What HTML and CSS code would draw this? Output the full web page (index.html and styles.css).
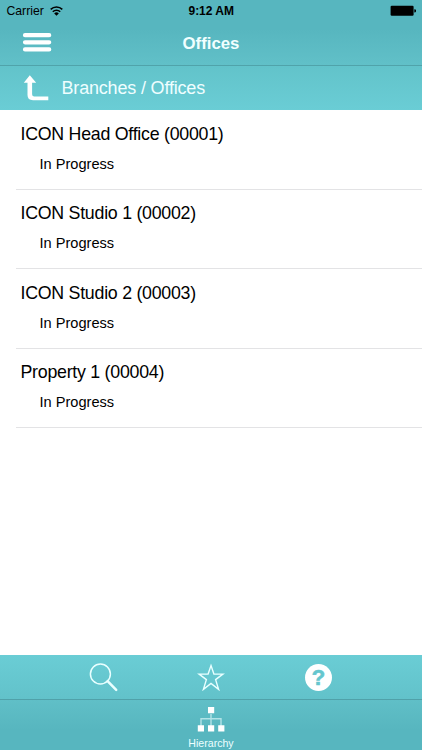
FILE: index.html
```html
<!DOCTYPE html>
<html lang="en">
<head>
  <meta charset="UTF-8" />
  <meta name="viewport" content="width=device-width, initial-scale=1.0" />
  <title>Offices</title>
  <link rel="stylesheet" href="styles.css">
</head>
<body>
  <header class="header">
    <div class="status">
      <div class="carrier">
        <span>Carrier</span>
        <svg width="13" height="11" viewBox="0 0 13 11" fill="none" stroke="#000" stroke-width="1.6">
          <path d="M.7 3.4a8.3 8.3 0 0 1 11.6 0M2.8 5.7a5.3 5.3 0 0 1 7.4 0" />
          <path d="M4.2 7.4a3.3 3.3 0 0 1 4.6 0L6.5 9.8z" fill="#000" stroke="none" />
        </svg>
      </div>
      <span class="time">9:12 AM</span>
      <svg class="battery" width="26" height="12" viewBox="0 0 26 12">
        <rect x=".6" y=".7" width="23" height="10" rx="1.2" />
        <path d="M24.3 4.2h.2a1.5 1.5 0 0 1 0 3.2h-.2z" />
      </svg>
    </div>
    <div class="navbar">
      <svg class="menu" width="30" height="20" viewBox="0 0 30 20" stroke="#fff" stroke-width="4.2" stroke-linecap="round">
        <path d="M3 2.2h24.2M3 9.3h24.2M3 16.4h24.2" />
      </svg>
      <h1>Offices</h1>
    </div>
  </header>

  <div class="breadcrumb">
    <svg width="26" height="26" viewBox="0 0 26 26">
      <path d="M6.8.3 13.2 7.8H9.1v11.4q0 2.2 2.2 2.2H25.3V25.2H10Q4.5 25.2 4.5 20V7.8H.8z" fill="#fff" />
    </svg>
    <span>Branches / Offices</span>
  </div>

  <ul class="list">
    <li><div class="name">ICON Head Office (00001)</div><div class="state">In Progress</div></li>
    <li><div class="name">ICON Studio 1 (00002)</div><div class="state">In Progress</div></li>
    <li><div class="name">ICON Studio 2 (00003)</div><div class="state">In Progress</div></li>
    <li><div class="name">Property 1 (00004)</div><div class="state">In Progress</div></li>
  </ul>

  <div class="toolbar">
    <svg width="30" height="30" viewBox="0 0 30 30" fill="none" stroke="#e9ffff">
      <circle cx="11.4" cy="12" r="10" stroke-width="1.5" />
      <path d="m18.6 19.2 8.6 8.6" stroke-width="2.5" stroke-linecap="round" />
    </svg>
    <svg width="28" height="28" viewBox="0 0 28 28" fill="none" stroke="#e9ffff" stroke-width="1.4">
      <path d="m14 2.6 2.9 8.5h9l-7.3 5.5 3 9.8-7.6-6-7.6 6 3-9.8L2.1 11.1h9z" />
    </svg>
    <div class="help">?</div>
  </div>

  <nav class="tabbar">
    <svg width="28" height="26" viewBox="0 0 28 26">
      <path d="M14 7v12M4 19v-7.2h20V19" fill="none" stroke="#b2e3e7" stroke-width="1.4" />
      <path d="M11 0h6.2v6.2H11zM.8 18.3H7v6.2H.8zM11 18.3h6.2v6.2H11zM21.2 18.3h6.2v6.2h-6.2z" fill="#fff" />
    </svg>
    <span>Hierarchy</span>
  </nav>
</body>
</html>
```

FILE: styles.css
```css
html, body {
  margin: 0;
  padding: 0;
  height: 100%;
}
body {
  display: flex;
  flex-direction: column;
  overflow: hidden;
  font-family: "Liberation Sans", Arial, sans-serif;
  color: #000;
  background: #fff;
}
svg { display: block; flex: none; }

/* top bars */
.header {
  height: 66px;
  box-sizing: border-box;
  border-bottom: 1px solid #50a3aa;
  background: linear-gradient(#57b6bf 0, #57b6bf 45%, #61c0c8 100%);
}
.status {
  display: grid;
  grid-template-columns: 1fr auto 1fr;
  align-items: center;
  height: 22px;
  padding: 0 6px 0 6.5px;
  font-size: 12.2px;
}
.carrier {
  display: flex;
  align-items: center;
  gap: 6px;
}
.time { font-weight: bold; font-size: 12px; }
.battery { justify-self: end; }
.navbar {
  display: grid;
  grid-template-columns: 1fr auto 1fr;
  align-items: center;
  height: 43px;
  padding: 0 22px;
}
.menu { margin-bottom: 2px; }
.navbar h1 {
  margin: 0;
  font-size: 16.8px;
  color: #f1ffff;
}
.breadcrumb {
  display: flex;
  align-items: center;
  gap: 12.5px;
  height: 44px;
  box-sizing: border-box;
  padding-left: 23px;
  font-size: 18px;
  letter-spacing: -0.18px;
  color: #effeff;
  background: linear-gradient(#62c3ca, #6acdd5);
}

/* offices */
.list {
  flex: 1;
  margin: 0;
  padding: 0.5px 0 0 16px;
  list-style: none;
}
.list li {
  height: 79.4px;
  box-sizing: border-box;
  padding: 12.5px 0 0 4.5px;
  border-bottom: 1px solid #e3e3e5;
}
.name {
  font-size: 17.8px;
  line-height: 22px;
  letter-spacing: -0.26px;
}
.state {
  margin: 9px 0 0 19px;
  font-size: 14.6px;
  line-height: 20px;
}

/* bottom bars */
.toolbar {
  display: flex;
  align-items: center;
  justify-content: space-between;
  height: 45px;
  box-sizing: border-box;
  padding: 0 90px 0 88.5px;
  border-bottom: 1px solid #50a1a9;
  background: linear-gradient(#6acdd5, #62c2ca);
}
.toolbar svg + svg { margin-left: -2px; }
.help {
  width: 27px;
  height: 27px;
  border-radius: 50%;
  background: #fff;
  color: #65c6ce;
  font-size: 22px;
  font-weight: bold;
  line-height: 27px;
  text-align: center;
  -webkit-text-stroke: 0.6px #65c6ce;
}
.tabbar {
  display: flex;
  flex-direction: column;
  align-items: center;
  height: 50px;
  box-sizing: border-box;
  padding-top: 7px;
  background: linear-gradient(#60bfc7, #57b6bf 60%);
}
.tabbar span {
  margin-top: 4px;
  font-size: 10.6px;
  line-height: 12px;
  color: #edffff;
}
```
